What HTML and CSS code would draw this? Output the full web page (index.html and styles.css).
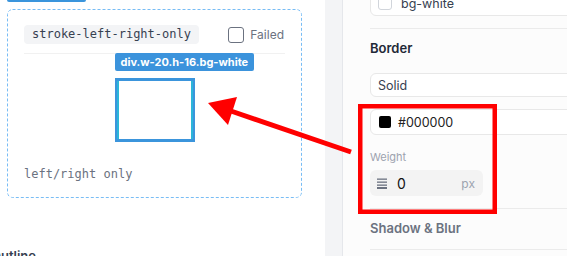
FILE: index.html
```html
<!DOCTYPE html>
<html>
<head>
<meta charset="utf-8">
<link rel="stylesheet" href="styles.css">
</head>
<body>
<div class="page">
  <div class="left">
    <div class="top-btn"></div>
    <div class="card">
      <div class="card-head">
        <span class="code-label">stroke-left-right-only</span>
        <label class="failed"><span class="check"></span>Failed</label>
      </div>
      <div class="sep"></div>
      <div class="stage">
        <div class="box">
          <span class="tag">div.w-20.h-16.bg-white</span>
        </div>
      </div>
      <div class="note">left/right only</div>
    </div>
    <div class="outline-title">Outline</div>
  </div>
  <div class="gutter"></div>
  <div class="right">
    <div class="section first">
      <div class="field field-top"><span class="mini-check"></span><span>bg-white</span></div>
    </div>
    <div class="section">
      <div class="heading">Border</div>
      <div class="field field-select"><span>Solid</span></div>
      <div class="field field-color"><span class="swatch"></span><span>#000000</span></div>
      <div class="sub-label">Weight</div>
      <div class="weight">
        <svg class="w-icon" width="10" height="11" viewBox="0 0 10 11"><rect x="0" y="0.5" width="10" height="1.3" fill="#6b7280"/><rect x="0" y="3.5" width="10" height="1.3" fill="#6b7280"/><rect x="0" y="6.5" width="10" height="1.3" fill="#6b7280"/><rect x="0" y="9" width="10" height="2" fill="#6b7280"/></svg>
        <span class="w-val">0</span>
        <span class="w-unit">px</span>
      </div>
    </div>
    <div class="section">
      <div class="heading muted">Shadow &amp; Blur</div>
    </div>
  </div>
</div>
<svg class="annot" width="567" height="256" viewBox="0 0 567 256">
  <rect x="360.25" y="106.25" width="134.5" height="105.5" fill="none" stroke="#ff0000" stroke-width="4.5"/>
  <line x1="351" y1="152" x2="228" y2="110" stroke="#ff0000" stroke-width="5"/>
  <polygon points="208,103 237,97 228,125" fill="#ff0000"/>
</svg>
</body>
</html>
```
FILE: styles.css
```css
* { box-sizing: border-box; }
html, body { margin: 0; padding: 0; }
body {
  width: 567px;
  height: 256px;
  overflow: hidden;
  position: relative;
  font-family: Inter, "Liberation Sans", sans-serif;
  background: #fff;
}
.page {
  display: flex;
  height: 256px;
}
.left {
  width: 325px;
  flex: none;
  background: #fff;
  padding-left: 7px;
}
.top-btn {
  width: 79px;
  height: 2px;
  background: #3b95dc;
  border-radius: 0 0 3px 3px;
}
.card {
  margin-top: 7px;
  width: 295px;
  height: 189px;
  border-radius: 5px;
  padding: 16px 17px 16px 17px;
  background-image: url("data:image/svg+xml,%3Csvg xmlns='http://www.w3.org/2000/svg' width='295' height='189'%3E%3Crect x='0.5' y='0.5' width='294' height='188' rx='5' fill='none' stroke='%2378bdf5' stroke-width='1' stroke-dasharray='3 2'/%3E%3C/svg%3E");
  background-repeat: no-repeat;
}
.card-head {
  display: flex;
  justify-content: space-between;
  align-items: center;
  height: 19px;
}
.code-label {
  font-family: "DejaVu Sans Mono", monospace;
  font-size: 12px;
  line-height: 19px;
  color: #374151;
  background: #f3f4f6;
  border-radius: 4px;
  padding: 0 8px;
}
.failed {
  display: flex;
  align-items: center;
  gap: 6px;
  font-size: 12px;
  color: #6b7280;
  margin-right: 1px;
}
.check {
  width: 16px;
  height: 16px;
  border: 1.5px solid #6b7280;
  border-radius: 3px;
  background: #fff;
}
.sep {
  margin-top: 9px;
  height: 1px;
  background: #f1f1f1;
}
.stage {
  display: flex;
  justify-content: center;
  padding-top: 24px;
}
.box {
  position: relative;
  width: 80px;
  height: 64px;
  background: #fff;
  border-style: solid;
  border-color: #3b95dc;
  border-width: 3px 2px;
  box-shadow: inset 2px 0 0 #2bb6d9, inset -2px 0 0 #2bb6d9;
}
.tag {
  position: absolute;
  left: -2px;
  top: -28px;
  height: 18px;
  line-height: 18px;
  padding: 0 6px;
  background: #3b93dc;
  color: #fff;
  font-size: 11px;
  font-weight: 700;
  border-radius: 2px;
  white-space: nowrap;
}
.note {
  margin-top: 24px;
  font-family: "DejaVu Sans Mono", monospace;
  font-size: 12px;
  line-height: 16px;
  color: #6b7280;
}
.outline-title {
  margin-top: 50px;
  margin-left: -16px;
  font-size: 13px;
  font-weight: 600;
  line-height: 16px;
  color: #374151;
}
.gutter {
  width: 18px;
  flex: none;
  background: #f3f4f6;
  border-right: 1px solid #e5e7eb;
}
.right {
  flex: 1;
  background: #fcfcfc;
  padding-left: 27px;
  overflow: hidden;
}
.section {
  border-bottom: 1px solid #ebebeb;
  padding: 10px 0 12px;
  width: 260px;
}
.section.first {
  padding: 0 0 12px;
}
.field {
  display: flex;
  align-items: center;
  gap: 8px;
  width: 240px;
  height: 26px;
  background: #fff;
  border: 1px solid #e8e8e8;
  border-radius: 6px;
  padding: 0 7px;
  font-size: 12.5px;
  color: #374151;
}
.field-top {
  margin-top: -10px;
  gap: 9px;
}
.mini-check {
  width: 14px;
  height: 14px;
  border: 1px solid #d1d5db;
  border-radius: 3px;
  background: #fff;
}
.heading {
  font-size: 13px;
  font-weight: 600;
  line-height: 18px;
  color: #1f2937;
}
.heading.muted {
  color: #6b7280;
}
.field-select {
  margin-top: 16px;
  height: 24px;
}
.field-color {
  margin-top: 12px;
  gap: 7px;
  padding-left: 8px;
  color: #222;
}
.swatch {
  width: 12px;
  height: 12px;
  background: #000;
  border-radius: 2px;
}
.sub-label {
  margin-top: 15px;
  font-size: 11px;
  line-height: 14px;
  color: #9ca3af;
}
.weight {
  margin-top: 6px;
  width: 113px;
  height: 26px;
  background: #f3f3f3;
  border-radius: 6px;
  display: flex;
  align-items: center;
  padding: 0 8px 0 7px;
}
.w-icon { flex: none; }
.w-val {
  margin-left: 10px;
  font-size: 14px;
  color: #111;
  flex: 1;
}
.w-unit {
  font-size: 12px;
  color: #9ca3af;
}
.annot {
  position: absolute;
  left: 0;
  top: 0;
  pointer-events: none;
}
```
